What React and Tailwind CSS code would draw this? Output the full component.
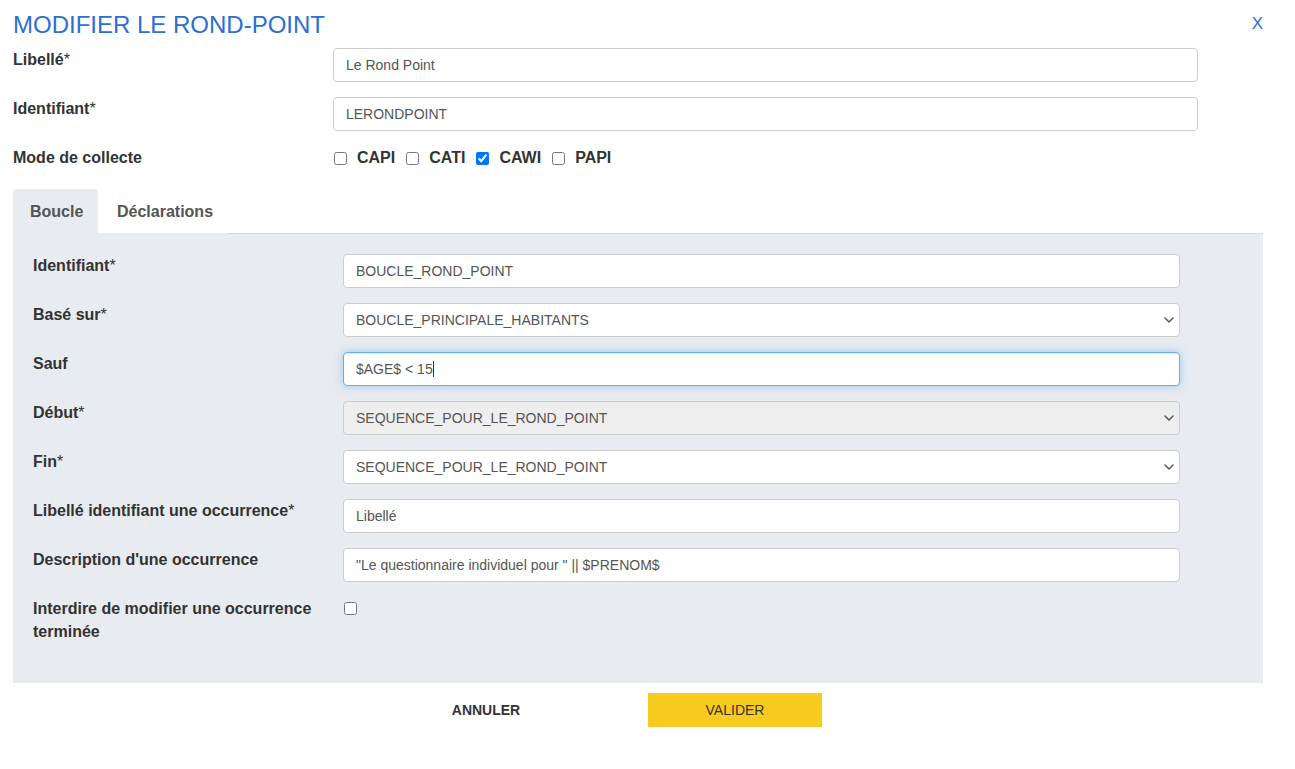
import React from "react";

const font = { fontFamily: '"Liberation Sans", Arial, sans-serif' };

const Chevron = () => (
	<svg width="10" height="6" viewBox="0 0 10 6" fill="none" className="shrink-0">
		<path d="M1 1l4 4 4-4" stroke="#555" strokeWidth="1.5" strokeLinecap="round" strokeLinejoin="round" />
	</svg>
);

// label text with a lighter required asterisk
const Label = ({ text }) => {
	const req = text.endsWith("*");
	return (
		<>
			{req ? text.slice(0, -1) : text}
			{req && <span className="font-normal">*</span>}
		</>
	);
};

const TopRow = ({ label, children }) => (
	<div className="flex items-start mb-[15px]">
		<div className="w-[320px] shrink-0 text-[16px] leading-[23px] font-bold text-[#333]">
			<Label text={label} />
		</div>
		{children}
	</div>
);

const PanelRow = ({ label, children }) => (
	<div className="flex items-start mb-[15px]">
		<div className="w-[310px] shrink-0 text-[16px] leading-[23px] font-bold text-[#333]">
			<Label text={label} />
		</div>
		{children}
	</div>
);

const inputCls =
	"h-[34px] flex items-center border border-[#ccc] rounded-[4px] px-[12px] text-[14px] text-[#555] bg-white";

const Select = ({ value, disabled }) => (
	<div
		className={`w-[837px] h-[34px] flex items-center justify-between border border-[#ccc] rounded-[4px] pl-[12px] pr-[5px] text-[14px] text-[#555] ${
			disabled ? "bg-[#eeeeee]" : "bg-white"
		}`}
	>
		<span>{value}</span>
		<Chevron />
	</div>
);

const modes = [
	{ name: "CAPI", checked: false },
	{ name: "CATI", checked: false },
	{ name: "CAWI", checked: true },
	{ name: "PAPI", checked: false },
];

export default function App() {
	return (
		<div className="bg-white min-h-[769px] w-[1295px]" style={font}>
			<div className="w-[1250px] ml-[13px] pt-[12px]">
				{/* Header */}
				<div className="flex justify-between items-start mb-[10px]">
					<h1 className="text-[24px] leading-[26px] text-[#2c6fd1] font-normal">MODIFIER LE ROND-POINT</h1>
					<span className="text-[17px] leading-[26px] text-[#2c6fd1] mt-[-1px]">X</span>
				</div>

				<TopRow label="Libellé*">
					<div className={`${inputCls} w-[865px]`}>Le Rond Point</div>
				</TopRow>
				<TopRow label="Identifiant*">
					<div className={`${inputCls} w-[865px]`}>LERONDPOINT</div>
				</TopRow>
				<div className="flex items-start h-[43px]">
					<div className="w-[320px] shrink-0 text-[16px] leading-[23px] font-bold text-[#333]">
						Mode de collecte
					</div>
					<div className="flex items-center pt-[2px]">
						{modes.map((m) => (
							<label key={m.name} className="flex items-center mr-[10px] ml-[1px]">
								<input type="checkbox" defaultChecked={m.checked} className="w-[13px] h-[13px] mr-[10px]" />
								<span className="text-[16px] leading-[20px] font-bold text-[#333]">{m.name}</span>
							</label>
						))}
					</div>
				</div>

				{/* Tabs */}
				<div className="flex items-start h-[45px]">
					<div className="w-[85px] h-[45px] bg-[#e8ebf0] rounded-t-[4px] pl-[17px] pt-[13px] text-[16px] leading-[20px] font-bold text-[#555]">
						Boucle
					</div>
					<div className="w-[130px] h-[45px] bg-white border-b border-[#e8ebf0] pl-[19px] pt-[13px] text-[16px] leading-[20px] font-bold text-[#555]">
						Déclarations
					</div>
					<div className="flex-1 h-[45px] border-b border-[#d8d8d8]" />
				</div>

				{/* Panel */}
				<div className="bg-[#e8ebf0] pt-[20px] pb-[5px] pl-[20px]">
					<PanelRow label="Identifiant*">
						<div className={`${inputCls} w-[837px]`}>BOUCLE_ROND_POINT</div>
					</PanelRow>
					<PanelRow label="Basé sur*">
						<Select value="BOUCLE_PRINCIPALE_HABITANTS" />
					</PanelRow>
					<PanelRow label="Sauf">
						<div className="w-[837px] h-[34px] flex items-center border border-[#66afe9] rounded-[4px] px-[12px] text-[14px] text-[#555] bg-white shadow-[inset_0_1px_1px_rgba(0,0,0,0.075),0_0_8px_rgba(102,175,233,0.6)]">
							<span>$AGE$ &lt; 15</span>
							<span className="w-px h-[16px] bg-[#333]" />
						</div>
					</PanelRow>
					<PanelRow label="Début*">
						<Select value="SEQUENCE_POUR_LE_ROND_POINT" disabled />
					</PanelRow>
					<PanelRow label="Fin*">
						<Select value="SEQUENCE_POUR_LE_ROND_POINT" />
					</PanelRow>
					<PanelRow label="Libellé identifiant une occurrence*">
						<div className={`${inputCls} w-[837px]`}>Libellé</div>
					</PanelRow>
					<PanelRow label="Description d'une occurrence">
						<div className={`${inputCls} w-[837px]`}>"Le questionnaire individuel pour " || $PRENOM$</div>
					</PanelRow>
					<div className="flex items-start mb-[15px] h-[66px]">
						<div className="w-[310px] shrink-0 text-[16px] leading-[23px] font-bold text-[#333]">
							Interdire de modifier une occurrence
							<br />
							terminée
						</div>
						<input type="checkbox" className="w-[13px] h-[13px] mt-[5px] ml-[1px]" />
					</div>
				</div>

				{/* Actions */}
				<div className="flex items-center pl-[386px] gap-[75px] mt-[10px]">
					<button className="w-[174px] h-[34px] text-[14px] font-bold text-[#333] uppercase">Annuler</button>
					<button className="w-[174px] h-[34px] bg-[#f8cb1f] text-[14px] text-[#333]">VALIDER</button>
				</div>
			</div>
		</div>
	);
}
